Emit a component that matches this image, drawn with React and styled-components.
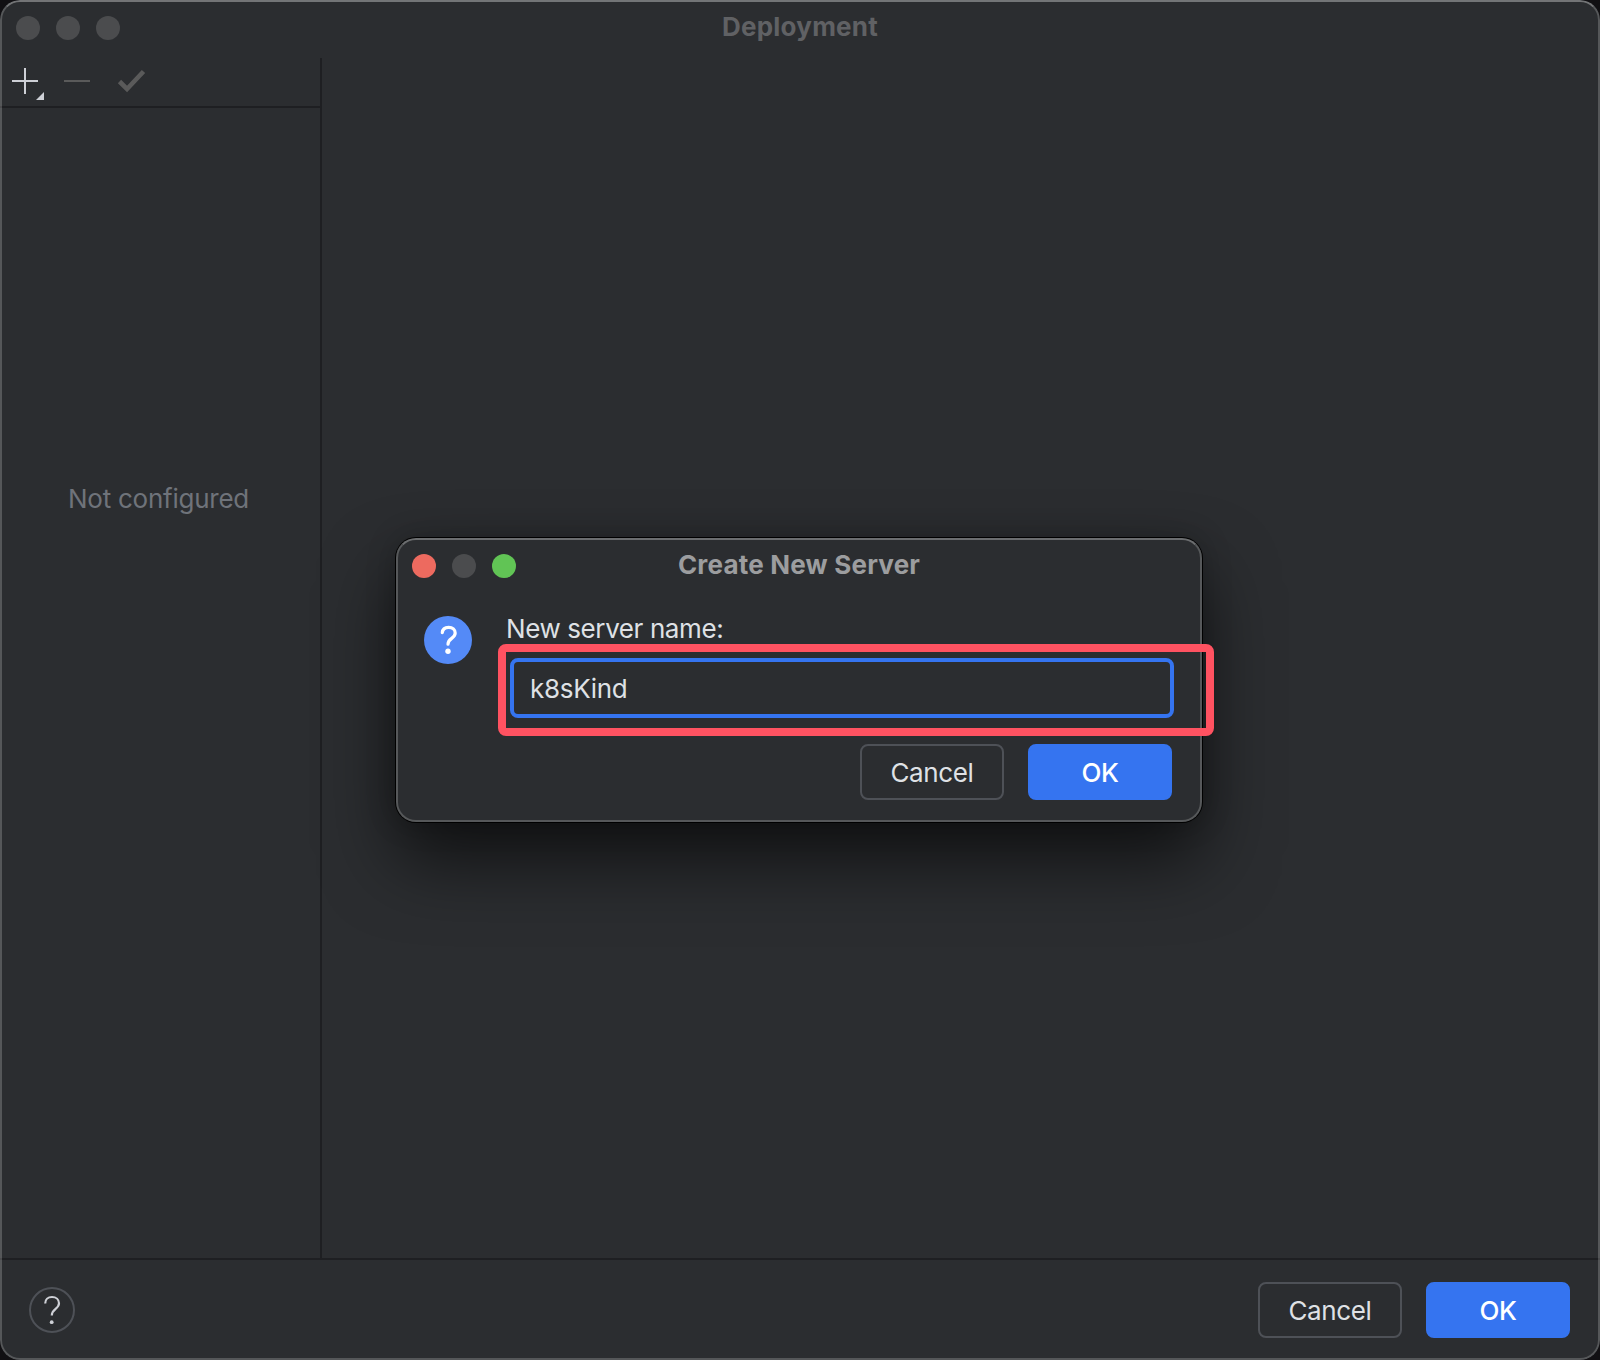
import React from "react";
import styled, { createGlobalStyle } from "styled-components";

const GlobalStyle = createGlobalStyle`
  *, *::before, *::after { box-sizing: border-box; }
  body { margin: 0; background: #111013; }
  button, input { font: inherit; margin: 0; }
`;

const Window = styled.div`
  position: relative;
  display: flex;
  flex-direction: column;
  width: 1600px;
  height: 1360px;
  overflow: hidden;
  background: #2b2d30;
  border-radius: 20px;
  color: #dfe1e5;
  font: 400 26px/32px Inter, "Liberation Sans", sans-serif;
`;

const Edge = styled.div`
  position: absolute;
  inset: 0;
  border: 2px solid rgba(255, 255, 255, 0.2);
  border-top-color: rgba(255, 255, 255, 0.34);
  border-radius: 20px;
  pointer-events: none;
`;

const TitleBar = styled.header`
  display: grid;
  grid-template-columns: 1fr auto 1fr;
  align-items: center;
  height: ${(p) => p.$height}px;
  flex: none;
  padding: 0 ${(p) => p.$pad}px 2px;
`;

const Lights = styled.div`
  display: flex;
  gap: 16px;
`;

const Light = styled.span`
  width: 24px;
  height: 24px;
  border-radius: 50%;
  background: ${(p) => p.$color};
`;

const Title = styled.h1`
  margin: 0;
  padding-bottom: 2px;
  font-size: 26px;
  line-height: 32px;
  font-weight: 700;
  letter-spacing: 0.2px;
  color: ${(p) => p.$color};
`;

const Body = styled.main`
  display: flex;
  flex: 1;
  min-height: 0;
`;

const Sidebar = styled.aside`
  display: flex;
  flex-direction: column;
  width: 322px;
  border-right: 2px solid #1e1f22;
`;

const Toolbar = styled.div`
  display: flex;
  height: 50px;
  border-bottom: 2px solid #1e1f22;

  svg { display: block; }
`;

const Empty = styled.p`
  margin: 375px 0 0 68px;
  color: #6f737a;
  letter-spacing: -0.25px;
`;

const Footer = styled.footer`
  display: flex;
  align-items: center;
  justify-content: space-between;
  height: 102px;
  padding: 0 30px 0 29px;
  border-top: 2px solid #1e1f22;
`;

const HelpButton = styled.button`
  width: 46px;
  height: 46px;
  padding: 0;
  border: 0;
  background: none;

  svg { display: block; }
`;

const Actions = styled.div`
  display: flex;
  gap: 24px;
`;

const Button = styled.button`
  width: 144px;
  height: 56px;
  padding: 1px 0 0;
  border: 2px solid ${(p) => (p.$primary ? "#3574f0" : "#4e5157")};
  border-radius: 8px;
  background: ${(p) => (p.$primary ? "#3574f0" : "transparent")};
  color: ${(p) => (p.$primary ? "#ffffff" : "#dfe1e5")};
  font-weight: ${(p) => (p.$primary ? 500 : 400)};
  letter-spacing: ${(p) => (p.$primary ? -0.5 : -0.35)}px;
`;

const Dialog = styled.section`
  position: absolute;
  left: 396px;
  top: 538px;
  display: flex;
  flex-direction: column;
  width: 806px;
  height: 284px;
  border: 2px solid #56585a;
  border-top-color: #6b6d6f;
  border-radius: 20px;
  background: #2b2d30;
  box-shadow: 0 0 0 1px #000, 0 38px 72px rgba(0, 0, 0, 0.62), 0 0 30px rgba(0, 0, 0, 0.22);
`;

const Form = styled.div`
  display: grid;
  grid-template-columns: 48px 664px;
  column-gap: 38px;
  margin: 18px 0 0 26px;

  > svg { display: block; margin-top: 4px; }
`;

const Field = styled.label`
  display: flex;
  flex-direction: column;
  padding-top: 1px;
`;

const FieldName = styled.span`
  margin-left: -5px;
  padding-left: 1px;
  letter-spacing: -0.4px;
`;

const Input = styled.input`
  width: 664px;
  height: 60px;
  margin-top: 13px;
  padding: 0 16px;
  border: 4px solid #3574f0;
  border-radius: 8px;
  outline: 0;
  background: #2b2d30;
  color: #dfe1e5;
  letter-spacing: -0.3px;
`;

const DialogActions = styled(Actions)`
  justify-content: flex-end;
  margin: 26px 28px 0 0;
`;

const Highlight = styled.div`
  position: absolute;
  left: 498px;
  top: 644px;
  width: 716px;
  height: 92px;
  border: 8px solid #ff5261;
  border-radius: 8px;
  pointer-events: none;
`;

function ToolIcons() {
  return (
    <svg width="160" height="48" viewBox="0 58 160 48" fill="none">
      <path d="M12 81H38M25 68V94" stroke="#ced0d6" strokeWidth="2" />
      <path d="M44 92V100H36Z" fill="#ced0d6" />
      <path d="M64 81H90" stroke="#5a5a5a" strokeWidth="2" />
      <path d="M119.5 81.5L127 89L143.5 71.5" stroke="#5a5a5a" strokeWidth="4.6" />
    </svg>
  );
}

function HelpIcon() {
  return (
    <svg width="46" height="46" viewBox="0 0 46 46" fill="none">
      <circle cx="23" cy="23" r="22" stroke="#4e5157" strokeWidth="2" />
      <path d="M16.2 16.5C16.2 12.6 19 10 23 10S30 12.6 30 16.3C30 22.2 22.8 21.6 22.8 28.5" stroke="#ced0d6" strokeWidth="2.2" />
      <circle cx="22.7" cy="35.2" r="1.9" fill="#ced0d6" />
    </svg>
  );
}

function QuestionIcon() {
  return (
    <svg width="48" height="48" viewBox="0 0 48 48" fill="none">
      <circle cx="24" cy="24" r="24" fill="#548af7" />
      <path d="M18.3 16.6C18.6 13.2 21 11.3 24.6 11.3C28.6 11.3 31.2 13.6 31.2 17.1C31.2 22.8 24 22 24 28.2" stroke="#fff" strokeWidth="3.2" strokeLinecap="round" />
      <circle cx="24" cy="35.2" r="2.7" fill="#fff" />
    </svg>
  );
}

export default function App() {
  return (
    <>
      <GlobalStyle />
      <Window>
        <TitleBar $height={58} $pad={16}>
          <Lights>
            <Light $color="#4b4c4e" />
            <Light $color="#4b4c4e" />
            <Light $color="#4b4c4e" />
          </Lights>
          <Title $color="#606164">Deployment</Title>
        </TitleBar>
        <Body>
          <Sidebar>
            <Toolbar><ToolIcons /></Toolbar>
            <Empty>Not configured</Empty>
          </Sidebar>
        </Body>
        <Footer>
          <HelpButton aria-label="Help"><HelpIcon /></HelpButton>
          <Actions>
            <Button>Cancel</Button>
            <Button $primary>OK</Button>
          </Actions>
        </Footer>
        <Edge />
        <Dialog>
          <TitleBar $height={54} $pad={14}>
            <Lights>
              <Light $color="#ed6a5f" />
              <Light $color="#4b4c4e" />
              <Light $color="#61c455" />
            </Lights>
            <Title $color="#9c9d9f">Create New Server</Title>
          </TitleBar>
          <Form>
            <QuestionIcon />
            <Field>
              <FieldName>New server name:</FieldName>
              <Input defaultValue="k8sKind" spellCheck={false} />
            </Field>
          </Form>
          <DialogActions>
            <Button>Cancel</Button>
            <Button $primary>OK</Button>
          </DialogActions>
        </Dialog>
        <Highlight />
      </Window>
    </>
  );
}
